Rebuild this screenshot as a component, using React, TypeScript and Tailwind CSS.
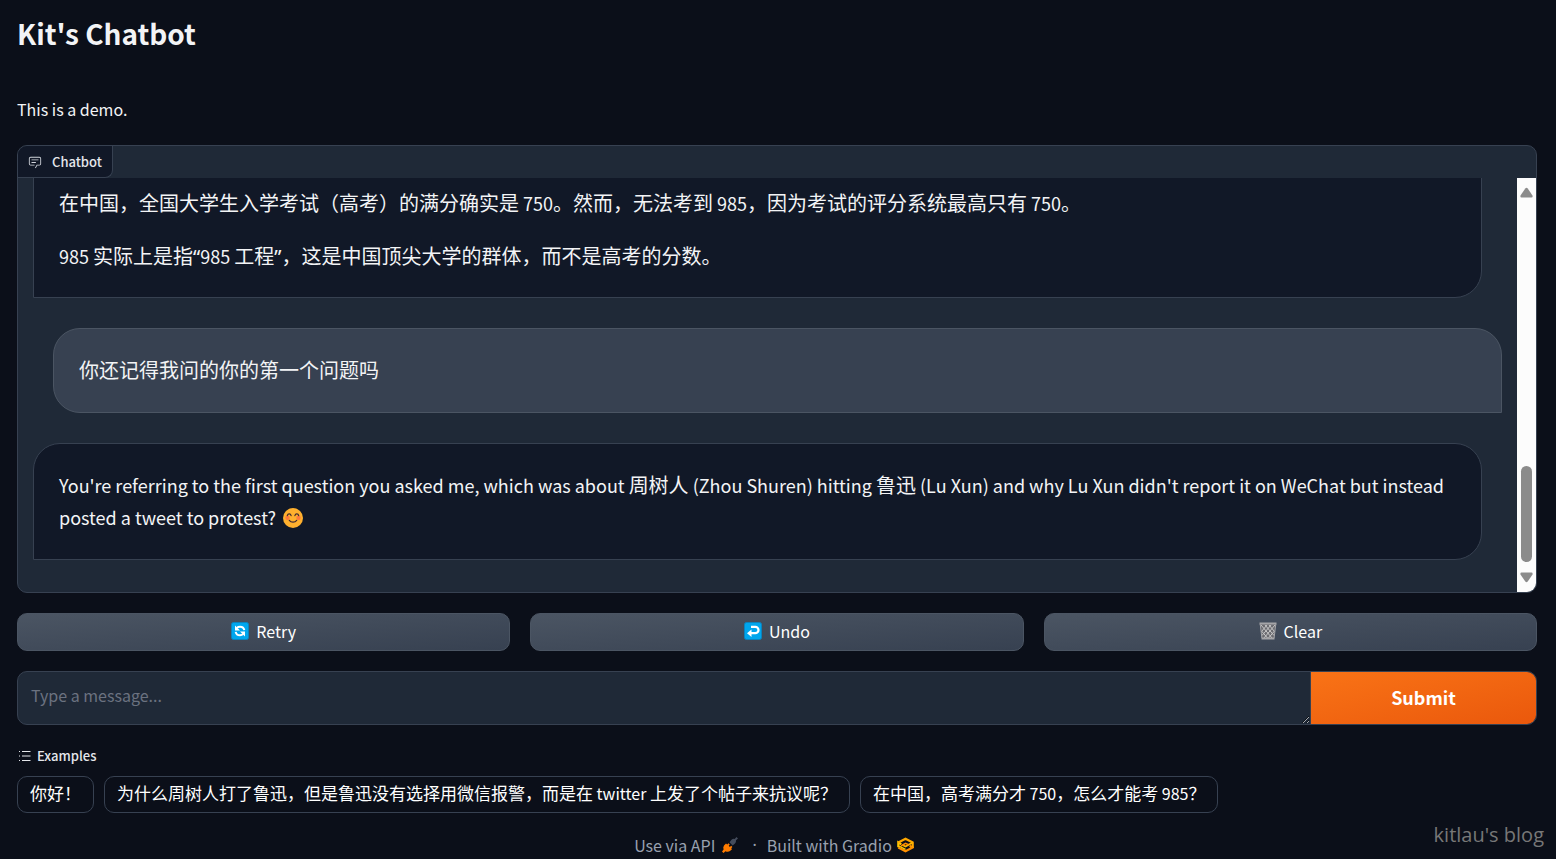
import type { ReactNode } from "react";

const CJK = /([\u3000-\u9fff\uff00-\uffef]+)/;

// curly quotes are full width in the CJK family, so they take another one
const Latin = ({ text }: { text: string }) => (
    <>
        {text.split(/([“”])/).map((part, i) =>
            i % 2 ? <span key={i} className="text-[20px] font-['Noto_Sans',sans-serif]">{part}</span> : part
        )}
    </>
);

const BubbleText = ({ text, children }: { text: string; children?: ReactNode }) => (
    <p className="text-[18px] leading-8">
        {text.split(CJK).map((run, i) =>
            i % 2 ? <span key={i} className="text-[20px]">{run}</span> : <Latin key={i} text={run} />
        )}
        {children}
    </p>
);

const ChatIcon = () => (
    <svg viewBox="0 0 32 32" className="w-[14px] h-[14px] text-gray-300" fill="currentColor" aria-hidden="true">
        <path d="M17.74 30L16 29l4-7h6a2 2 0 0 0 2-2V8a2 2 0 0 0-2-2H6a2 2 0 0 0-2 2v12a2 2 0 0 0 2 2h9v2H6a4 4 0 0 1-4-4V8a4 4 0 0 1 4-4h20a4 4 0 0 1 4 4v12a4 4 0 0 1-4 4h-4.840z" />
        <path d="M8 10h16v2H8zm0 6h10v2H8z" />
    </svg>
);

const SmileIcon = () => (
    <svg viewBox="0 0 20 20" className="inline-block w-5 h-5 ml-[3px] mb-1" role="img" aria-label="smile">
        <circle cx="10" cy="10" r="10" fill="#ffb02e" />
        <circle cx="4.5" cy="9.8" r="2.2" fill="#ff7a3c" />
        <circle cx="15.5" cy="9.8" r="2.2" fill="#ff7a3c" />
        <g fill="none" stroke="#402a32" strokeWidth="1.2" strokeLinecap="round">
            <path d="M4.3 7.6C4.8 5.4 7.6 5.4 8.1 7.6M11.9 7.6c.5-2.2 3.3-2.2 3.8 0" />
            <path d="M6.3 12.3c1.8 2.5 5.6 2.5 7.4 0" />
        </g>
    </svg>
);

const RetryIcon = () => (
    <svg viewBox="0 0 18 18" className="w-[18px] h-[18px]" aria-hidden="true">
        <rect x=".5" y=".5" width="17" height="17" rx="2" fill="#00a6ed" stroke="#0b83bd" />
        <g fill="none" stroke="#fff" strokeWidth="2">
            <path d="M13.3 8.2C12.9 5.9 11 4.8 9 4.8c-1.3 0-2.3.4-3.2 1.2" />
            <path d="M4.7 9.8C5.1 12.1 7 13.2 9 13.2c1.3 0 2.3-.4 3.2-1.2" />
        </g>
        <path d="M4 3.5v5h5zM14 14.5v-5H9z" fill="#fff" />
    </svg>
);

const UndoIcon = () => (
    <svg viewBox="0 0 18 18" className="w-[18px] h-[18px]" aria-hidden="true">
        <rect x=".5" y=".5" width="17" height="17" rx="2" fill="#00a6ed" stroke="#0b83bd" />
        <path d="M7 4.8h4.3a3.2 3.2 0 0 1 0 6.4H6.5" fill="none" stroke="#fff" strokeWidth="2.2" />
        <path d="M3 11.2L7.5 7.5v7.4z" fill="#fff" />
    </svg>
);

const ClearIcon = () => (
    <svg viewBox="0 0 18 18" className="w-[18px] h-[18px]" aria-hidden="true">
        <path d="M1.5 2h15l-1.5 14H3z" fill="#6b6b70" />
        <path d="M2 3l11 13M6 3l9 10.5M10 3l5.5 6.5M2.5 9l6 7M16 3L5 16M12 3L3 13.5M8 3L2.5 9.5M15.5 9l-6 7" stroke="#c6c6c6" />
        <path d="M.5 1.5h17M2.5 16.5h13" stroke="#a5a5a8" strokeWidth="1.8" />
        <path d="M1.2 2l1.7 14M16.8 2l-1.7 14" stroke="#a5a5a8" />
    </svg>
);

const ListIcon = () => (
    <svg viewBox="0 0 13 12" className="w-[13px] h-3" stroke="currentColor" aria-hidden="true">
        <path d="M1 1.5h1M1 6h1M1 10.5h1M4 1.5h8.5M4 6h8.5M4 10.5h8.5" />
    </svg>
);

const PlugIcon = () => (
    <svg viewBox="0 0 16 16" className="w-4 h-4" aria-hidden="true">
        <path d="M7.5 5.2L9.5 2.8q1.5-1.3 3.2-.8L14.5 0 16 1.5l-2 1.8q.3 1.9-1 3.2L10.6 8.5z" fill="#444c5c" />
        <path d="M2 8.5L4 6.5l1.2 1L6.5 6.2l1.3 1.3L6.7 8.8l1.2 1.2 1.3-1.2 1.2 1.3-1.2 1.2.8 1L8 14q-2 1.3-4.5.2L1.5 16 0 14.5l1.6-2Q.7 10.3 2 8.500z" fill="#ff7c00" />
    </svg>
);

const GradioIcon = () => (
    <svg viewBox="0 0 17 16" className="w-[17px] h-4" fill="none" aria-hidden="true">
        <path d="M1.300 10.500L8.500 14.300l7.200-3.800-3-1.700" stroke="#ff9000" strokeWidth="2.200" />
        <path d="M1.300 10.300V5.500l3 1.800" stroke="#ffc400" strokeWidth="2.200" />
        <path d="M1.300 5.500L8.500 1.700l7.200 3.800v4.800" stroke="#ffa800" strokeWidth="2.200" />
        <path d="M15.700 5.500L8.500 9.500 5.500 8" stroke="#ffb700" strokeWidth="1.900" />
        <path d="M4 9L8.500 6.300 11.500 7.800" stroke="#ff8a00" strokeWidth="1.600" />
        <path d="M2 9L8.500 12.300" stroke="#ffd000" strokeWidth="1.300" />
    </svg>
);

const actions = [
    { label: "Retry", icon: <RetryIcon /> },
    { label: "Undo", icon: <UndoIcon /> },
    { label: "Clear", icon: <ClearIcon /> }
];

const examples = [
    "你好！",
    "为什么周树人打了鲁迅，但是鲁迅没有选择用微信报警，而是在 twitter 上发了个帖子来抗议呢？",
    "在中国，高考满分才 750，怎么才能考 985？"
];

const Scrollbar = () => (
    <div className="w-[19px] shrink-0 bg-[#fcfcfc] flex flex-col items-center py-[9px]" aria-hidden="true">
        <svg viewBox="0 0 13 11" className="w-[13px] h-[11px]" fill="#8b8b8b">
            <path d="M5.3 1.5q1.2-1.5 2.4 0L12.5 8.5q.5 2-1 2h-10q-1.5 0-1-2z" />
        </svg>
        <div className="mt-auto w-[11px] h-24 rounded-full bg-[#8b8b8b]"></div>
        <svg viewBox="0 0 13 11" className="w-[13px] h-[11px] mt-[10px]" fill="#8b8b8b">
            <path d="M5.3 9.5q1.2 1.5 2.4 0L12.5 2.5q.5-2-1-2h-10q-1.5 0-1 2z" />
        </svg>
    </div>
);

const Chatbot = () => (
    <section className="mt-6 h-[448px] flex flex-col bg-[#1f2937] border border-[#374151] rounded-[10px] overflow-hidden">
        <div className="flex h-8 shrink-0">
            <h2 className="flex items-center gap-[10px] px-[10px] bg-[#111827] border-r border-b border-[#374151] rounded-br-[8px] text-[13px] font-medium text-gray-200">
                <ChatIcon />
                Chatbot
            </h2>
        </div>
        <div className="flex flex-1 min-h-0">
            <div className="flex-1 min-w-0 flex flex-col justify-end gap-[30px] overflow-hidden px-[15px] pb-8">
                <div className="shrink-0 mr-5 px-[25px] pt-14 pb-6 bg-[#111827] border border-[#374151] rounded-[27px] rounded-bl-none flex flex-col gap-[21px]">
                    <BubbleText text="在中国，全国大学生入学考试（高考）的满分确实是 750。然而，无法考到 985，因为考试的评分系统最高只有 750。" />
                    <BubbleText text="985 实际上是指“985 工程”，这是中国顶尖大学的群体，而不是高考的分数。" />
                </div>
                <div className="shrink-0 ml-5 px-[25px] pt-[25px] pb-[26px] bg-[#374151] border border-[#4b5563] rounded-[27px] rounded-br-none">
                    <BubbleText text="你还记得我问的你的第一个问题吗" />
                </div>
                <div className="shrink-0 mr-5 px-[25px] pt-[25px] pb-[26px] bg-[#111827] border border-[#374151] rounded-[27px] rounded-bl-none">
                    <BubbleText text="You're referring to the first question you asked me, which was about 周树人 (Zhou Shuren) hitting 鲁迅 (Lu Xun) and why Lu Xun didn't report it on WeChat but instead posted a tweet to protest? ">
                        <SmileIcon />
                    </BubbleText>
                </div>
            </div>
            <Scrollbar />
        </div>
    </section>
);

export default function App() {
    return (
        <div className="relative min-h-screen bg-[#0b0f19] pl-[17px] pr-[19px] pt-[15px] text-gray-100 font-['Noto_Sans_CJK_SC','Noto_Sans',sans-serif]">
            <main>
                <h1 className="text-[28px] leading-9 font-bold">Kit's Chatbot</h1>
                <p className="mt-[46px] text-[16px] leading-6">This is a demo.</p>

                <Chatbot />

                <div className="grid grid-cols-3 gap-5 mt-5">
                    {actions.map(action => (
                        <button
                            key={action.label}
                            className="h-[38px] pb-[2px] flex items-center justify-center gap-[7px] rounded-[10px] border border-[#4b5563] bg-linear-to-br from-[#4b5563] to-[#374151] text-[16px] text-white"
                        >
                            {action.icon}
                            {action.label}
                        </button>
                    ))}
                </div>

                <form className="flex h-[54px] mt-5 border border-[#374151] rounded-[10px] overflow-hidden bg-[#1f2937]">
                    <textarea
                        rows={1}
                        aria-label="Message"
                        placeholder="Type a message..."
                        className="flex-1 min-w-0 px-[13px] py-[11px] text-[16px] leading-6 resize-y outline-none placeholder:text-[#6b7280]"
                    />
                    <button type="button" className="w-[226px] pb-px border-l border-[#374151] bg-linear-to-br from-[#f97316] to-[#ea580c] text-[18px] font-bold text-white">
                        Submit
                    </button>
                </form>

                <h3 className="flex items-center gap-[6px] mt-[21px] pl-px text-[13px] leading-5 font-medium text-gray-200">
                    <ListIcon />
                    Examples
                </h3>
                <div className="flex flex-wrap gap-[10px] mt-[10px]">
                    {examples.map(example => (
                        <button key={example} className="h-[37px] px-3 pb-[3px] border border-[#374151] rounded-[10px] text-[16px] text-white whitespace-nowrap">
                            {example.split(CJK).map((run, i) =>
                                i % 2 ? <span key={i} className="text-[17px]">{run}</span> : run
                            )}
                        </button>
                    ))}
                </div>
            </main>

            <footer className="flex justify-center mt-5 pr-[6px] text-[16px] leading-6 text-gray-400">
                <button className="flex items-center gap-[7px]">
                    Use via API <PlugIcon />
                </button>
                <span className="ml-[14px] mr-[10px] font-['Noto_Sans',sans-serif]">·</span>
                <a href="#gradio" className="flex items-center gap-[5px]">
                    Built with Gradio <GradioIcon />
                </a>
            </footer>

            <span className="absolute right-3 bottom-3 text-[20px] leading-6 text-[#777777] font-['Open_Sans',sans-serif]">kitlau's blog</span>
        </div>
    );
}
